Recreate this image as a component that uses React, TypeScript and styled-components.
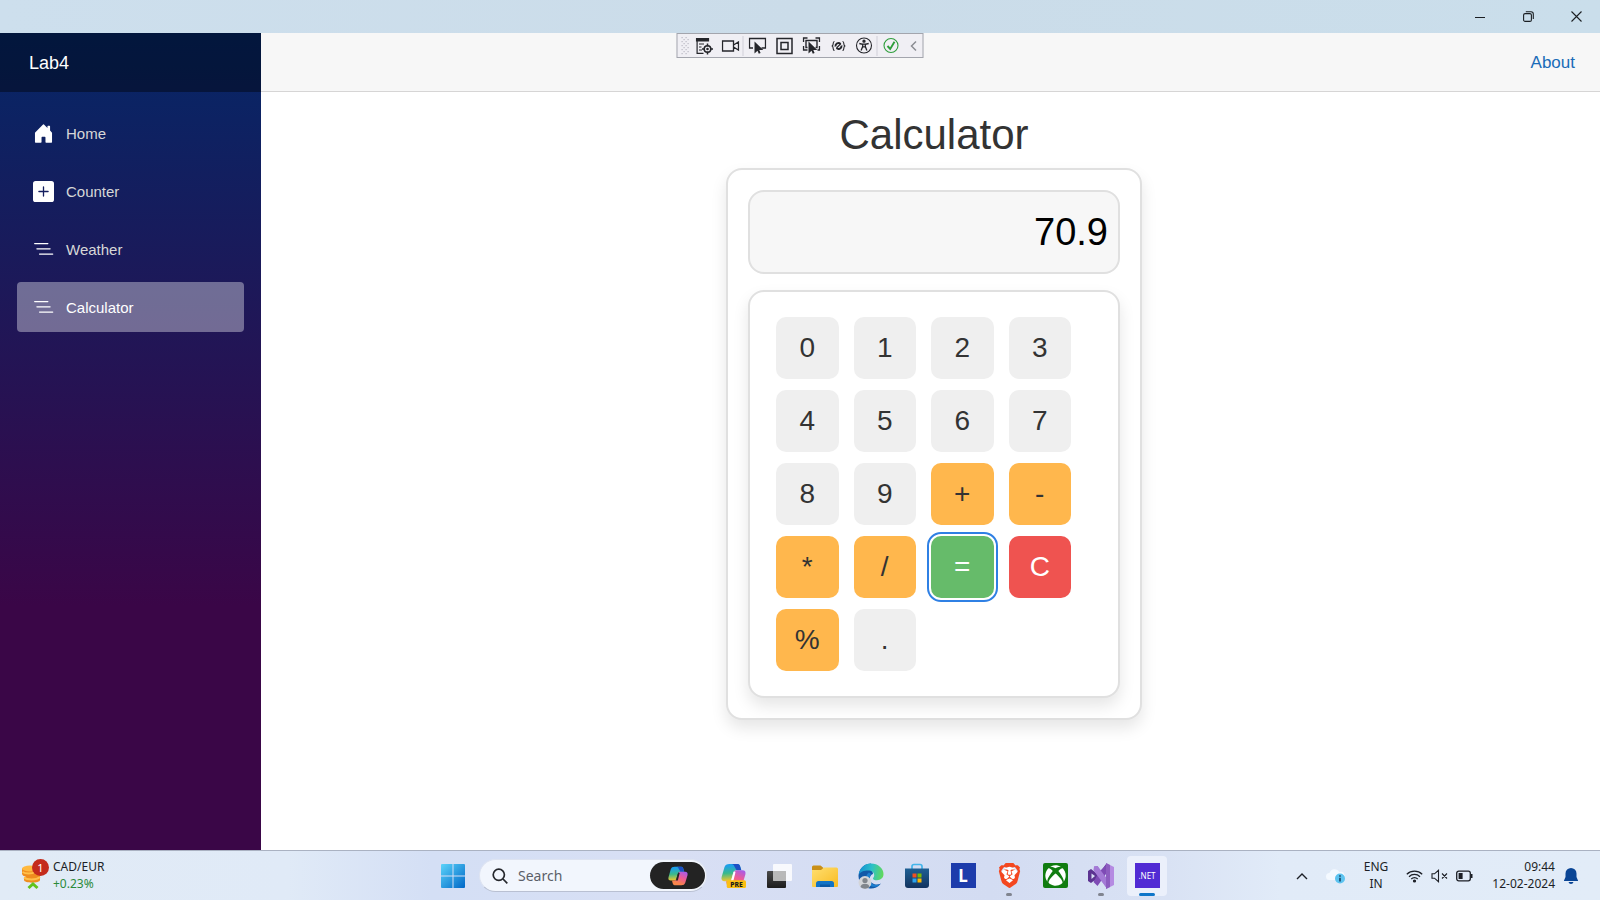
import React, { useState } from "react";
import styled, { createGlobalStyle, css } from "styled-components";
import { FaXbox } from "react-icons/fa";
import { SiBrave } from "react-icons/si";

const GlobalStyle = createGlobalStyle`
  *, *::before, *::after { box-sizing: border-box; }
  body {
    margin: 0;
    background: #fff;
    color: #212529;
    font-family: "Liberation Sans", Arial, Helvetica, sans-serif;
    font-size: 17px;
  }
  button, input { font-family: inherit; }
  svg { display: block; flex: none; }
`;

const systemFont = `"Noto Sans", "Open Sans", sans-serif`;

/* ---------- Window ---------- */

const Desktop = styled.div`
  display: flex;
  flex-direction: column;
  min-height: 100vh;
`;

const TitleBar = styled.header`
  display: flex;
  justify-content: flex-end;
  height: 33px;
  background: linear-gradient(90deg, #cddfed, #cbdce9 50%, #cadeeb);
`;

const CaptionButton = styled.button`
  display: flex;
  align-items: center;
  justify-content: center;
  width: 48px;
  padding: 0;
  border: 0;
  background: none;
  color: #1b1f23;
`;

const Page = styled.div`
  position: relative;
  display: flex;
  flex: 1;
`;

/* ---------- Sidebar ---------- */

const Sidebar = styled.aside`
  flex: none;
  width: 261px;
  background-image: linear-gradient(180deg, rgb(5, 39, 103) 0%, #3a0647 70%);
`;

const Brand = styled.div`
  display: flex;
  align-items: center;
  height: 59px;
  padding: 2px 29px 0;
  background: rgba(0, 0, 0, 0.4);
`;

const BrandLink = styled.a`
  color: #fff;
  font-size: 18px;
  text-decoration: none;
`;

const NavList = styled.nav`
  display: flex;
  flex-direction: column;
  gap: 8px;
  padding: 16px 17px;
`;

const NavLink = styled.a<{ $active?: boolean }>`
  display: flex;
  align-items: center;
  gap: 12px;
  height: 50px;
  padding: 0 16px;
  border-radius: 4px;
  background: ${(p) => (p.$active ? "rgba(255, 255, 255, 0.37)" : "transparent")};
  color: ${(p) => (p.$active ? "#fff" : "#d7d7d7")};
  font-size: 15px;
  text-decoration: none;
`;

/* ---------- Main ---------- */

const Main = styled.main`
  flex: 1;
  min-width: 0;
`;

const TopRow = styled.div`
  display: flex;
  align-items: center;
  justify-content: flex-end;
  height: 59px;
  padding: 2px 25px 0;
  border-bottom: 1px solid #d6d5d5;
  background: #f7f7f7;
`;

const AboutLink = styled.a`
  color: #1a6cb8;
  font-size: 17px;
  text-decoration: none;
`;

const Content = styled.article`
  display: flex;
  flex-direction: column;
  align-items: center;
  padding: 18px 25px 33px 32px;
`;

const Title = styled.h1`
  margin: 0 0 8px;
  color: #333;
  font-size: 42px;
  font-weight: 400;
  line-height: 50px;
`;

const Card = styled.section`
  width: 416px;
  padding: 20px;
  border: 2px solid #e0e0e0;
  border-radius: 16px;
  background: #fff;
  box-shadow: 0 8px 16px rgba(0, 0, 0, 0.1);
`;

const Display = styled.input`
  display: block;
  width: 100%;
  height: 84px;
  margin: 0 0 16px;
  padding: 0 10px;
  border: 2px solid #e0e0e0;
  border-radius: 16px;
  outline: 0;
  background: #f7f7f7;
  color: #000;
  font-size: 38px;
  text-align: right;
`;

const Keypad = styled.div`
  padding: 25px 26px;
  border: 2px solid #e0e0e0;
  border-radius: 16px;
  background: #fff;
  box-shadow: 0 8px 16px rgba(0, 0, 0, 0.1);
`;

const KeyGrid = styled.div`
  display: grid;
  grid-template-columns: repeat(4, 1fr);
  gap: 11px 15px;
  max-width: 295px;
`;

type KeyKind = "digit" | "operator" | "equals" | "clear";

const keyColors: Record<KeyKind, { back: string; text: string }> = {
  digit: { back: "#efefef", text: "#333" },
  operator: { back: "#ffb74d", text: "#333" },
  equals: { back: "#66bb6a", text: "#fff" },
  clear: { back: "#ef5350", text: "#fff" },
};

const Key = styled.button<{ $kind: KeyKind }>`
  height: 62px;
  padding: 0;
  border: 0;
  border-radius: 10px;
  background: ${(p) => keyColors[p.$kind].back};
  color: ${(p) => keyColors[p.$kind].text};
  font-size: 28px;
  &:focus {
    outline: 2px solid #2f80e4;
    outline-offset: 2px;
  }
`;

/* ---------- Debug toolbar ---------- */

const DebugBar = styled.div`
  position: absolute;
  top: 0;
  left: 50%;
  transform: translateX(-50%);
  display: flex;
  align-items: center;
  height: 25px;
  padding: 0 1px 0 3px;
  border: 1px solid #a3a5ad;
  background: #f0eff4;
`;

const debugWidths = { narrow: 17, normal: 25, wide: 27 };

const DebugButton = styled.button<{ $width?: keyof typeof debugWidths }>`
  display: flex;
  align-items: center;
  justify-content: center;
  width: ${(p) => debugWidths[p.$width ?? "normal"]}px;
  height: 23px;
  padding: 0;
  border: 0;
  background: none;
  color: #25262b;
`;

const DebugDivider = styled.span`
  width: 1px;
  height: 20px;
  background: #cfd0d8;
`;

/* ---------- Taskbar ---------- */

const Taskbar = styled.footer`
  display: grid;
  grid-template-columns: 1fr auto 1fr;
  align-items: center;
  height: 50px;
  border-top: 1px solid #aab2c2;
  background: linear-gradient(90deg, #e1ebf6 0%, #e0eaf7 18%, #d4dff5 27%, #d8dff4 42%, #d3dcf2 62%, #d9e2f4 73%, #e1ebf8 80%, #e2ecf8 100%);
  color: #1c1f26;
  font-family: ${systemFont};
  font-size: 12px;
  line-height: 17px;
`;

const Widget = styled.button`
  display: flex;
  align-items: center;
  justify-self: start;
  gap: 3px;
  padding: 0 0 0 20px;
  border: 0;
  background: none;
  color: inherit;
  font-size: 12px;
  line-height: 17px;
  text-align: left;
`;

const Lines = styled.span<{ $align?: "center" | "right" }>`
  display: flex;
  flex-direction: column;
  padding-bottom: 2px;
  text-align: ${(p) => p.$align ?? "left"};
`;

const Gain = styled.span`
  color: #2b8a3a;
`;

const Apps = styled.div`
  display: flex;
  align-items: center;
  gap: 6px;
`;

const AppButton = styled.button<{ $state?: "open" | "active" }>`
  position: relative;
  display: flex;
  align-items: center;
  justify-content: center;
  width: 40px;
  height: 40px;
  padding: 0;
  border: 0;
  border-radius: 4px;
  background: ${(p) => (p.$state === "active" ? "#ebf0fb" : "none")};
  ${(p) =>
    p.$state &&
    css`
      &::after {
        content: "";
        position: absolute;
        bottom: 0;
        left: 50%;
        width: ${p.$state === "active" ? 16 : 6}px;
        height: 3px;
        border-radius: 2px;
        background: ${p.$state === "active" ? "#0f76c9" : "#80848f"};
        transform: translateX(-50%);
      }
    `}
`;

const SearchBox = styled.label`
  display: flex;
  align-items: center;
  gap: 10px;
  width: 228px;
  height: 33px;
  padding: 0 1px 0 12px;
  border: 1px solid #dde3f1;
  border-bottom-color: #b9c0d2;
  border-radius: 17px;
  background: #f2f6fd;
`;

const SearchInput = styled.input`
  flex: 1;
  min-width: 0;
  padding: 0;
  border: 0;
  outline: 0;
  background: none;
  color: #5b5f68;
  font-size: 14px;
  &::placeholder { color: #5b5f68; opacity: 1; }
`;

const CopilotPill = styled.button`
  display: flex;
  align-items: center;
  justify-content: center;
  width: 55px;
  height: 27px;
  padding: 0;
  border: 0;
  border-radius: 14px;
  background: #232323;
`;

const Tray = styled.div`
  display: flex;
  align-items: center;
  justify-self: end;
  gap: 8px;
  padding-right: 21px;
`;

const TrayGroup = styled.div<{ $gap: number }>`
  display: flex;
  align-items: center;
  gap: ${(p) => p.$gap}px;
  padding-right: 10px;
`;

/* ---------- Icons ---------- */

const navPaths = {
  home: "M6.5 14.5v-3.505c0-.245.25-.495.5-.495h2c.25 0 .5.25.5.5v3.5a.5.5 0 0 0 .5.5h4a.5.5 0 0 0 .5-.5v-7a.5.5 0 0 0-.146-.354L13 5.793V2.5a.5.5 0 0 0-.5-.5h-1a.5.5 0 0 0-.5.5v1.293L8.354 1.146a.5.5 0 0 0-.708 0l-6 6A.5.5 0 0 0 1.5 7.5v7a.5.5 0 0 0 .5.5h4a.5.5 0 0 0 .5-.5Z",
  plus: "M2 0a2 2 0 0 0-2 2v12a2 2 0 0 0 2 2h12a2 2 0 0 0 2-2V2a2 2 0 0 0-2-2H2zm6.5 4.5v3h3a.5.5 0 0 1 0 1h-3v3a.5.5 0 0 1-1 0v-3h-3a.5.5 0 0 1 0-1h3v-3a.5.5 0 0 1 1 0z",
  list: "M4.5 11.500a.5.5 0 0 1 .5-.5h10a.5.5 0 0 1 0 1H5a.5.5 0 0 1-.5-.5zM2.500 7.500a.5.5 0 0 1 .5-.5h10a.5.5 0 0 1 0 1H3a.5.5 0 0 1-.5-.5zM.8 3.500a.5.5 0 0 1 .5-.5h10a.5.5 0 0 1 0 1h-10a.5.5 0 0 1-.5-.5z",
};

const NavIcon = ({ name }: { name: keyof typeof navPaths }) => (
  <svg width="21" height="21" viewBox="0 0 16 16" fill="#fff">
    <path d={navPaths[name]} />
  </svg>
);

const Line = ({ d, size = 18, width = 1.4 }: { d: string; size?: number; width?: number }) => (
  <svg width={size} height={size} viewBox="0 0 18 18" fill="none" stroke="currentColor" strokeWidth={width}>
    <path d={d} />
  </svg>
);

const cursorPath = "M6 4.500v12l3-2.700 1.300 3 1.800-.8-1.300-2.900h4z";

const Grip = () => (
  <svg width="10" height="20" viewBox="0 0 10 20" fill="#b9bac4">
    {[0, 1, 2, 3, 4, 5, 6, 7, 8].map((r) =>
      [0, 1].map((c) => <rect key={`${r}${c}`} x={c * 4 + (r % 2) * 2 + 1} y={r * 2 + 1} width="1.200" height="1.200" />)
    )}
  </svg>
);

const TreeIcon = () => (
  <svg width="18" height="18" viewBox="0 0 18 18" fill="none" stroke="currentColor" strokeWidth="1.200">
    <path d="M1 1.500h12v2.500H1z" fill="currentColor" />
    <path d="M1.600 4v12.400H8M3.500 7h5M3.500 10h2.500M3.500 13h3" />
    <circle cx="12" cy="12" r="3.300" strokeWidth="1.600" />
    <path d="M12 6.500v3M12 14.500v3M6.500 12h3M14.500 12h3" strokeWidth="1.500" />
    <circle cx="12" cy="12" r=".7" />
  </svg>
);

const SelectIcon = () => (
  <svg width="18" height="18" viewBox="0 0 18 18" fill="none" stroke="currentColor" strokeWidth="1.300">
    <path d="M4.500 11H1V1.500h16V11h-4" />
    <path d={cursorPath} fill="currentColor" stroke="none" />
  </svg>
);

const TrackIcon = () => (
  <svg width="18" height="18" viewBox="0 0 18 18" fill="none" stroke="currentColor" strokeWidth="1.400">
    <path d="M5 10.500H3.500v-7h11v7H13M1 5V1h4M13 1h4v4M1 9v4h4M17 9v4h-2" />
    <path d={cursorPath} fill="currentColor" stroke="none" />
  </svg>
);

const ReloadIcon = () => (
  <svg width="14" height="14" viewBox="0 0 14 14" fill="none" stroke="currentColor" strokeWidth="1.100">
    <path d="M3 2.500c-1.300 0-1.300.7-1.300 2 0 1.200 0 2-1.200 2.500 1.200.5 1.200 1.300 1.200 2.500 0 1.300 0 2 1.300 2M11 2.500c1.300 0 1.300.7 1.300 2 0 1.200 0 2 1.200 2.500-1.200.5-1.200 1.300-1.200 2.500 0 1.300 0 2-1.300 2" />
    <path d="M4 7.500a3 3 0 0 1 5-2.600M10 6.500a3 3 0 0 1-5 2.600" strokeWidth="2" />
    <path d="M5 9l4.500-4.500" />
  </svg>
);

const AccessIcon = () => (
  <svg width="17" height="17" viewBox="0 0 17 17" fill="none" stroke="currentColor" strokeWidth="1.100">
    <circle cx="8.500" cy="8.500" r="7.500" />
    <circle cx="8.500" cy="4.200" r="1.100" fill="currentColor" />
    <path d="M3.800 6.500l3.400.8v2.200l-1.600 4M13.200 6.500l-3.400.8v2.200l1.600 4M7.200 7.200h2.600M7.200 9.800h2.600" strokeWidth="1.300" />
  </svg>
);

const CheckIcon = () => (
  <svg width="17" height="17" viewBox="0 0 17 17" fill="none" stroke="#2e9e3b" strokeWidth="1.100">
    <circle cx="8.500" cy="8.500" r="7" />
    <path d="M5 9l2.700 3L12 4.800" strokeWidth="1.900" />
  </svg>
);

const CoinsIcon = () => (
  <svg width="30" height="34" viewBox="0 0 30 34">
    <path d="M2 9.500v5c0 2 2 3 4 3l-2 1v2.500c0 3.500 16 3.500 16 0V12L12 8z" fill="#ef8d1f" />
    <ellipse cx="10" cy="9.500" rx="8" ry="3" fill="#ffb93f" />
    <path d="M2.500 13c3 2 9 2 13 0M4 18.500c3 2.500 12 3 16-.5" stroke="#ffc04a" strokeWidth="1.800" fill="none" />
    <path d="M8.500 29l4.500-4 4.500 4" fill="none" stroke="#62c21c" strokeWidth="3" />
    <circle cx="20.500" cy="8.500" r="8.500" fill="#c42b1c" />
    <text x="20.500" y="12.500" fontFamily="Noto Sans, sans-serif" fontSize="11" fill="#fff" textAnchor="middle">1</text>
  </svg>
);

const StartIcon = () => (
  <svg width="24" height="24" viewBox="0 0 24 24">
    <defs>
      <linearGradient id="start" x1="0" y1="0" x2="24" y2="24" gradientUnits="userSpaceOnUse">
        <stop stopColor="#5bd3fa" />
        <stop offset="1" stopColor="#0067c7" />
      </linearGradient>
    </defs>
    <path d="M0 1a1 1 0 0 1 1-1h10.500v11.500H0zM12.500 0H23a1 1 0 0 1 1 1v10.500H12.500zM0 12.500h11.500V24H1a1 1 0 0 1-1-1zM12.500 12.500H24V23a1 1 0 0 1-1 1H12.500z" fill="url(#start)" />
  </svg>
);

const CopilotIcon = ({ id, size, pre }: { id: string; size: number; pre?: boolean }) => (
  <svg width={size} height={size} viewBox="0 0 24 24">
    <defs>
      <linearGradient id={`${id}a`} x1="4" y1="3" x2="5" y2="17" gradientUnits="userSpaceOnUse">
        <stop stopColor="#1ea0e8" />
        <stop offset=".5" stopColor="#3ab98c" />
        <stop offset="1" stopColor="#e9c531" />
      </linearGradient>
      <linearGradient id={`${id}b`} x1="20" y1="7" x2="14" y2="22" gradientUnits="userSpaceOnUse">
        <stop stopColor="#a85be8" />
        <stop offset=".5" stopColor="#ee5a96" />
        <stop offset="1" stopColor="#f9854a" />
      </linearGradient>
    </defs>
    <path d="M8 1h8c1.500 0 2 1 2.500 2.500L19.500 7H15c-2 0-3 1-3.500 3l-1.300 5c-.5 1.800-1.500 2.500-3 2.500H3.500C1 17.500 0 16 .6 13.500L3.300 4C4 2 5.500 1 8 1z" fill={`url(#${id}a)`} />
    <path d="M12 1h4c1.500 0 2 1 2.500 2.500L19.500 7H15l-2-3.500C12.500 2 11.500 1 10 1z" fill="#1c4fc4" />
    <path d="M16 23H8c-1.500 0-2-1-2.500-2.500L4.800 17.500H7.500c2 0 3-1 3.500-3l1.300-5C12.800 7.700 13.800 7 15.300 7h5.200C23 7 24 8.500 23.400 11l-2.700 9c-.7 2-2.200 3-4.700 3z" fill={`url(#${id}b)`} />
    <path d="M14 8.500h-1.800L9.500 17.500h2.300z" fill={pre ? "#fff" : "#232323"} />
    {pre && (
      <>
        <rect x="5.500" y="16.500" width="18.500" height="7.500" rx="1.500" fill="#fcbf12" />
        <text x="14.800" y="22.700" fontFamily="Noto Sans, sans-serif" fontWeight="800" fontSize="6.500" fill="#1b1b1b" textAnchor="middle">PRE</text>
      </>
    )}
  </svg>
);

const TaskViewIcon = () => (
  <svg width="26" height="26" viewBox="0 0 26 26">
    <defs>
      <linearGradient id="tv" x1="0" y1="0" x2="0" y2="1">
        <stop stopColor="#4a4a4a" />
        <stop offset="1" stopColor="#1c1c1c" />
      </linearGradient>
    </defs>
    <rect x="1" y="8" width="19" height="17" rx="1" fill="url(#tv)" />
    <rect x="7" y="1" width="19" height="17" rx="1" fill="#fff" opacity=".82" />
    <path d="M7 8h13v10H7z" fill="#a9a9a9" opacity=".7" />
  </svg>
);

const FolderIcon = () => (
  <svg width="26" height="24" viewBox="0 0 26 24">
    <defs>
      <linearGradient id="folder" x1="0" y1="0" x2="1" y2="1">
        <stop stopColor="#ffdf70" />
        <stop offset="1" stopColor="#f8bb22" />
      </linearGradient>
    </defs>
    <path d="M0 3a1.500 1.500 0 0 1 1.500-1.500h7L11.500 4V8H0z" fill="#c98f17" />
    <path d="M0 6h9l3-2.500h12.500A1.500 1.500 0 0 1 26 5v17a1 1 0 0 1-1 1H1a1 1 0 0 1-1-1z" fill="url(#folder)" />
    <path d="M4 23v-3.500A2.500 2.500 0 0 1 6.500 17h13a2.500 2.500 0 0 1 2.500 2.500V23z" fill="#1173c6" />
    <path d="M8 20.500h10V23H8z" fill="#0b58a4" />
  </svg>
);

const EdgeIcon = () => (
  <svg width="26" height="26" viewBox="0 0 26 26">
    <defs>
      <linearGradient id="edge" x1="1" y1="8" x2="25" y2="12" gradientUnits="userSpaceOnUse">
        <stop stopColor="#1591d3" />
        <stop offset=".5" stopColor="#2cc0c8" />
        <stop offset="1" stopColor="#62d95a" />
      </linearGradient>
    </defs>
    <path d="M13 .5A12.500 12.500 0 1 0 23 20.500c-4 2-10 1-11-4-.6-3 1-5 3-5.500z" fill="#1259a8" />
    <path d="M.6 12C1.500 5 6.500.5 13 .5c7 0 12.500 5 12.500 10.500 0 4-3 6.200-6.500 6.200-2.600 0-4-.9-4-1.800 0-.8 1.200-1.200 1.200-3.200 0-2.500-2.500-4.600-6-4.600C6 7.600 2 9 .6 12z" fill="url(#edge)" />
    <path d="M11 9.500c-3.500 2-4.300 8.500 0 12.500 3 2.500 8 2.500 11-.5-5 1.500-9.500-.5-10.300-4.500-.5-3 .8-4 1.300-6z" fill="#1c7fd0" />
    <circle cx="7" cy="19.500" r="6.500" fill="#d3d5d9" />
    <circle cx="7" cy="17.500" r="2.600" fill="#80858c" />
    <path d="M2.500 24c0-4.500 9-4.500 9 0-2.500 2.300-6.500 2.300-9 0z" fill="#80858c" />
  </svg>
);

const StoreIcon = () => (
  <svg width="24" height="26" viewBox="0 0 24 26">
    <defs>
      <linearGradient id="store" x1="0" y1="0" x2="0" y2="1">
        <stop stopColor="#1e5f94" />
        <stop offset="1" stopColor="#12335f" />
      </linearGradient>
    </defs>
    <path d="M7 6V3.500A2 2 0 0 1 9 1.500h6a2 2 0 0 1 2 2V6" fill="none" stroke="#44b5ea" strokeWidth="1.700" />
    <path d="M0 5.500h24V22a3 3 0 0 1-3 3H3a3 3 0 0 1-3-3z" fill="url(#store)" />
    <path d="M7.500 10.500h4v4h-4z" fill="#f25022" />
    <path d="M12.500 10.500h4v4h-4z" fill="#7fba00" />
    <path d="M7.500 15.500h4v4h-4z" fill="#2ba4ee" />
    <path d="M12.500 15.500h4v4h-4z" fill="#ffb900" />
  </svg>
);

const LetterTile = styled.span<{ $back: string; $size: number; $bold?: boolean }>`
  display: flex;
  align-items: center;
  justify-content: center;
  width: 25px;
  height: 25px;
  background: ${(p) => p.$back};
  color: #fff;
  font-family: ${systemFont};
  font-size: ${(p) => p.$size}px;
  font-weight: ${(p) => (p.$bold ? 700 : 400)};
  line-height: 1;
`;

const BraveTile = styled.span`
  display: flex;
  color: #f4471f;
  background: radial-gradient(circle at 50% 50%, #fff 8px, transparent 9px);
`;

const XboxTile = styled.span`
  display: flex;
  align-items: center;
  justify-content: center;
  width: 25px;
  height: 25px;
  border-radius: 2px;
  background: #107c10;
  color: #fff;
`;

const VisualStudioIcon = () => (
  <svg width="26" height="26" viewBox="0 0 26 26">
    <path d="M0 8l3-2 6.500 5v4L3 20l-3-2z" fill="#5c3391" />
    <path d="M3.500 10.500L7 13l-3.500 3z" fill="#d8dff4" />
    <path d="M6 18L18 1v8L10 20z" fill="#68399f" />
    <path d="M6 3.500L9.500 3 19 16v9.500L5.500 7z" fill="#a074d2" />
    <path d="M5.500 19l4 4L19 9.500V1L11 9z" fill="#7e4bb5" />
    <path d="M6 3.500L9.500 3 19 16v9.500L6 8z" fill="#a47ad6" />
    <path d="M18 0l8 4v18l-8 4z" fill="#b58be2" />
    <path d="M18 0l4 2v22l-4 2z" fill="#8d5dc0" />
  </svg>
);

const CloudIcon = () => (
  <svg width="20" height="16" viewBox="0 0 20 16">
    <path d="M3.500 12a3.500 3.500 0 0 1 0-7 5.500 5.500 0 0 1 10-1 4 4 0 0 1 2 8z" fill="#f4f9ff" />
    <circle cx="14" cy="10.500" r="5" fill="#5cc3f0" />
    <path d="M14 9.800v3.700M14 7.300v1.400" stroke="#123a5a" strokeWidth="1.500" />
  </svg>
);

const WifiIcon = () => (
  <svg width="17" height="14" viewBox="0 0 17 14" fill="none" stroke="currentColor" strokeWidth="1.200">
    <path d="M.8 5.200a11 11 0 0 1 15.400 0M3 7.700a7.800 7.800 0 0 1 11 0M5.300 10a4.500 4.500 0 0 1 6.400 0" />
    <circle cx="8.500" cy="12" r="1" fill="currentColor" />
  </svg>
);

const MuteIcon = () => (
  <svg width="17" height="14" viewBox="0 0 17 14" fill="none" stroke="currentColor" strokeWidth="1.100">
    <path d="M1 4.800h2.500L7.500 1.300v11.400L3.500 9.200H1zM11 4.500l5 5M16 4.500l-5 5" />
  </svg>
);

const BatteryIcon = () => (
  <svg width="18" height="12" viewBox="0 0 18 12">
    <rect x=".7" y="1.200" width="13.600" height="9.600" rx="2" fill="none" stroke="currentColor" strokeWidth="1.300" />
    <rect x="2.600" y="3" width="4" height="6" fill="currentColor" />
    <path d="M15 4h1.500v4H15z" fill="currentColor" />
  </svg>
);

const BellIcon = () => (
  <svg width="16" height="18" viewBox="0 0 16 18" fill="#0a4595">
    <path d="M8 1a5.500 5.500 0 0 0-5.500 5.500V10L1 13.500V14h14v-.5L13.500 10V6.500A5.500 5.500 0 0 0 8 1zM5.500 15a2.600 2.600 0 0 0 5 0z" />
  </svg>
);

/* ---------- App ---------- */

const keys: { label: string; kind: KeyKind }[] = [
  ..."0123456789".split("").map((label) => ({ label, kind: "digit" as KeyKind })),
  { label: "+", kind: "operator" },
  { label: "-", kind: "operator" },
  { label: "*", kind: "operator" },
  { label: "/", kind: "operator" },
  { label: "=", kind: "equals" },
  { label: "C", kind: "clear" },
  { label: "%", kind: "operator" },
  { label: ".", kind: "digit" },
];

const operations: Record<string, (a: number, b: number) => number> = {
  "+": (a, b) => a + b,
  "-": (a, b) => a - b,
  "*": (a, b) => a * b,
  "/": (a, b) => a / b,
  "%": (a, b) => a % b,
};

function evaluate(text: string): string {
  const parts = text.match(/^(-?[\d.]+)([-+*/%])([\d.]+)$/);
  return parts ? String(operations[parts[2]](Number(parts[1]), Number(parts[3]))) : text;
}

function Calculator() {
  const [value, setValue] = useState("70.9");
  const press = (label: string, kind: KeyKind) => {
    if (kind === "clear") setValue("");
    else if (kind === "equals") setValue(evaluate(value));
    else setValue(value + label);
  };
  return (
    <Card aria-label="Calculator">
      <Display aria-label="Result" readOnly value={value} />
      <Keypad>
        <KeyGrid>
          {keys.map(({ label, kind }) => (
            <Key key={label} type="button" $kind={kind} autoFocus={kind === "equals"} onClick={() => press(label, kind)}>
              {label}
            </Key>
          ))}
        </KeyGrid>
      </Keypad>
    </Card>
  );
}

function DebugToolbar() {
  return (
    <DebugBar role="toolbar" aria-label="Debug tools">
      <Grip />
      <DebugButton $width="wide" aria-label="Live visual tree"><TreeIcon /></DebugButton>
      <DebugButton aria-label="Record"><Line d="M1 4h11v10H1zM12 8l5-3v8l-5-3" width={1.3} /></DebugButton>
      <DebugDivider />
      <DebugButton $width="wide" aria-label="Select element"><SelectIcon /></DebugButton>
      <DebugButton $width="wide" aria-label="Layout adorners"><Line d="M1.500 1.500h15v15h-15zM5.500 5.500h7v7h-7z" width={1.5} /></DebugButton>
      <DebugButton $width="wide" aria-label="Track focus"><TrackIcon /></DebugButton>
      <DebugButton $width="wide" aria-label="Hot reload settings"><ReloadIcon /></DebugButton>
      <DebugButton aria-label="Accessibility"><AccessIcon /></DebugButton>
      <DebugDivider />
      <DebugButton $width="wide" aria-label="Hot reload"><CheckIcon /></DebugButton>
      <DebugButton $width="narrow" aria-label="Collapse">
        <svg width="8" height="12" viewBox="0 0 8 12" fill="none" stroke="#8b8c93" strokeWidth="1.500">
          <path d="M6.500 1.500L2 6l4.500 4.500" />
        </svg>
      </DebugButton>
    </DebugBar>
  );
}

export default function App() {
  return (
    <Desktop>
      <GlobalStyle />
      <TitleBar>
        <CaptionButton aria-label="Minimize">
          <svg width="10" height="10" viewBox="0 0 10 10" stroke="currentColor"><path d="M0 5.500h10" /></svg>
        </CaptionButton>
        <CaptionButton aria-label="Restore">
          <svg width="11" height="11" viewBox="0 0 11 11" fill="none" stroke="currentColor" strokeWidth="1.100">
            <rect x=".6" y="2.600" width="7.800" height="7.800" rx="1.500" />
            <path d="M2.800.7H8a2.300 2.300 0 0 1 2.300 2.300v5" />
          </svg>
        </CaptionButton>
        <CaptionButton aria-label="Close">
          <svg width="11" height="11" viewBox="0 0 11 11" stroke="currentColor" strokeWidth="1.100"><path d="M.5.5l10 10M10.500.5l-10 10" /></svg>
        </CaptionButton>
      </TitleBar>

      <Page>
        <Sidebar>
          <Brand><BrandLink href="#">Lab4</BrandLink></Brand>
          <NavList aria-label="Main">
            <NavLink href="#home"><NavIcon name="home" />Home</NavLink>
            <NavLink href="#counter"><NavIcon name="plus" />Counter</NavLink>
            <NavLink href="#weather"><NavIcon name="list" />Weather</NavLink>
            <NavLink href="#calculator" $active aria-current="page"><NavIcon name="list" />Calculator</NavLink>
          </NavList>
        </Sidebar>
        <Main>
          <TopRow><AboutLink href="#about">About</AboutLink></TopRow>
          <Content>
            <Title>Calculator</Title>
            <Calculator />
          </Content>
        </Main>
        <DebugToolbar />
      </Page>

      <Taskbar>
        <Widget>
          <CoinsIcon />
          <Lines><span>CAD/EUR</span><Gain>+0.23%</Gain></Lines>
        </Widget>
        <Apps>
          <AppButton aria-label="Start"><StartIcon /></AppButton>
          <SearchBox>
            <svg width="16" height="16" viewBox="0 0 16 16" fill="none" stroke="#25272c" strokeWidth="1.700">
              <circle cx="6.800" cy="6.800" r="5.600" />
              <path d="M11 11l4.300 4.300" />
            </svg>
            <SearchInput type="text" aria-label="Search" placeholder="Search" />
            <CopilotPill aria-label="Copilot in search"><CopilotIcon id="pill" size={20} /></CopilotPill>
          </SearchBox>
          <AppButton aria-label="Copilot preview"><CopilotIcon id="pre" size={25} pre /></AppButton>
          <AppButton aria-label="Task view"><TaskViewIcon /></AppButton>
          <AppButton aria-label="File Explorer"><FolderIcon /></AppButton>
          <AppButton aria-label="Edge"><EdgeIcon /></AppButton>
          <AppButton aria-label="Store"><StoreIcon /></AppButton>
          <AppButton><LetterTile $back="#1d3cab" $size={17} $bold>L</LetterTile></AppButton>
          <AppButton $state="open" aria-label="Brave"><BraveTile><SiBrave size={25} /></BraveTile></AppButton>
          <AppButton aria-label="Xbox"><XboxTile><FaXbox size={21} /></XboxTile></AppButton>
          <AppButton $state="open" aria-label="Visual Studio"><VisualStudioIcon /></AppButton>
          <AppButton $state="active"><LetterTile $back="#512bd4" $size={8}>.NET</LetterTile></AppButton>
        </Apps>
        <Tray>
          <TrayGroup $gap={18}>
            <svg width="12" height="8" viewBox="0 0 12 8" fill="none" stroke="currentColor" strokeWidth="1.400"><path d="M1 7l5-5 5 5" /></svg>
            <CloudIcon />
            <Lines $align="center"><span>ENG</span><span>IN</span></Lines>
          </TrayGroup>
          <TrayGroup $gap={8}>
            <WifiIcon />
            <MuteIcon />
            <BatteryIcon />
          </TrayGroup>
          <Lines $align="right"><span>09:44</span><span>12-02-2024</span></Lines>
          <BellIcon />
        </Tray>
      </Taskbar>
    </Desktop>
  );
}
